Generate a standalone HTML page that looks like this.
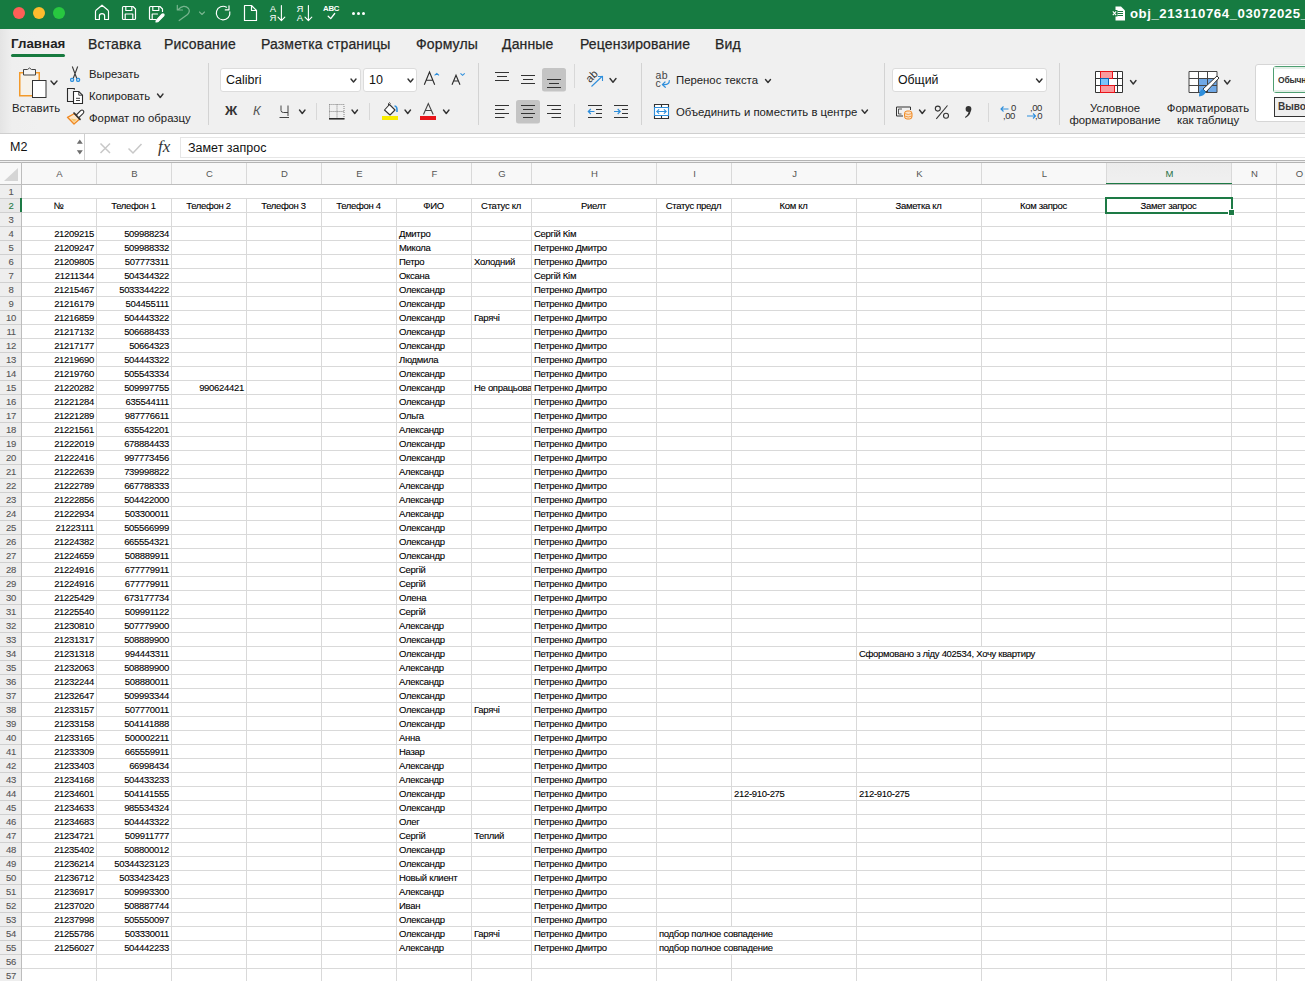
<!DOCTYPE html><html><head><meta charset="utf-8"><style>
*{margin:0;padding:0;box-sizing:border-box}
html,body{width:1305px;height:981px;overflow:hidden;background:#fff;font-family:"Liberation Sans",sans-serif;position:relative}
.a{position:absolute;white-space:nowrap}
.t{position:absolute;white-space:nowrap;font-size:9.5px;letter-spacing:-0.3px;line-height:14px;color:#000;margin-top:1px;-webkit-text-stroke:0.1px #000}
.r{text-align:right}
.c{text-align:center}
.vl{position:absolute;width:1px;background:#d9d9d9}
.hl{position:absolute;height:1px;background:#d9d9d9}
.rb{font-size:11.5px;color:#222;position:absolute;white-space:nowrap;line-height:14px}
svg{position:absolute;overflow:visible}
</style></head><body>

<div class="a" style="left:0;top:0;width:1305px;height:29px;background:#167b41"></div>
<div class="a" style="left:13px;top:7px;width:12px;height:12px;border-radius:50%;background:#fe5f57"></div>
<div class="a" style="left:33px;top:7px;width:12px;height:12px;border-radius:50%;background:#febc2e"></div>
<div class="a" style="left:53px;top:7px;width:12px;height:12px;border-radius:50%;background:#28c840"></div>
<svg style="left:0;top:0" width="400" height="29" fill="none" stroke="#fff" stroke-width="1.2" stroke-linejoin="round" stroke-linecap="round">
<path d="M95.5 11.5 Q95.5 10.8 96 10.3 L102 5.2 L108 10.3 Q108.5 10.8 108.5 11.5 V19.5 H104.6 V15.8 Q104.6 13.6 102 13.6 Q99.4 13.6 99.4 15.8 V19.5 H95.5 Z"/>
<path d="M123.5 6.5 H133 L135.5 9 V18.5 Q135.5 19.5 134.5 19.5 H123.5 Q122.5 19.5 122.5 18.5 V7.5 Q122.5 6.5 123.5 6.5 Z M125.8 6.5 V10.5 H131.8 V6.5 M125.2 19.5 V14 H132.8 V19.5"/>
<path d="M150.5 6.5 H160 L162.5 9 V11.5 M156 19.5 H150.5 Q149.5 19.5 149.5 18.5 V7.5 Q149.5 6.5 150.5 6.5 M152.8 6.5 V10.5 H158.8 V6.5 M152.2 19.5 V14 H157.5"/>
<path d="M156.3 20.3 L162 14.2 Q163 13.4 163.8 14.2 Q164.5 15 163.7 15.9 L158 21.7 L156 21.9 Z" fill="#fff"/>
<path d="M229.8 11.9 A6.8 6.8 0 1 1 226.5 7.2 M225.3 9.9 H229 V5.9" />
<path d="M244.5 5.5 H251.5 L256.5 10.5 V20.5 H244.5 Z M251.5 5.5 V10.5 H256.5"/>
<path d="M281.4 5.5 V20.5 M278 17.2 L281.4 20.6 L284.8 17.2 M308.4 5.5 V20.5 M305 17.2 L308.4 20.6 L311.8 17.2" stroke-width="1.1"/>
<path d="M177.3 5.3 V10 H182.5 M177.8 9.8 Q184 3.5 188.5 8.5 Q190.5 11.5 187.5 14.5 L179.2 20.6" stroke="#79b58f" stroke-width="1.2"/>
<path d="M199.5 12 L202 14.5 L204.5 12" stroke="#79b58f" stroke-width="1.1"/>
<path d="M328.2 16.2 L330.7 18.6 L334.7 13.5" stroke-width="1.3"/>
</svg>
<div class="a" style="left:269px;top:4px;font-size:9.5px;line-height:9px;color:#fff;width:8px;text-align:center">A</div>
<div class="a" style="left:269px;top:13px;font-size:9.5px;line-height:9px;color:#fff;width:8px;text-align:center">Я</div>
<div class="a" style="left:296px;top:4px;font-size:9.5px;line-height:9px;color:#fff;width:8px;text-align:center">Я</div>
<div class="a" style="left:296px;top:13px;font-size:9.5px;line-height:9px;color:#fff;width:8px;text-align:center">A</div>
<div class="a" style="left:323px;top:4px;font-size:7.8px;line-height:9px;color:#fff;font-weight:bold;letter-spacing:-0.2px">ABC</div>
<div class="a" style="left:351.5px;top:11.6px;width:3px;height:3px;border-radius:50%;background:#fff"></div>
<div class="a" style="left:356.5px;top:11.6px;width:3px;height:3px;border-radius:50%;background:#fff"></div>
<div class="a" style="left:361.5px;top:11.6px;width:3px;height:3px;border-radius:50%;background:#fff"></div>
<svg style="left:0;top:0" width="1305" height="29"><path d="M1115.5 6.5 H1121 L1125 10.5 V20.5 H1115.5 Z" fill="#fff"/><path d="M1117.5 11.5 H1123 M1117.5 13.5 H1123 M1117.5 15.5 H1123" stroke="#177a3f" stroke-width="1"/><rect x="1111.5" y="10" width="6" height="6.5" fill="#177a3f"/><path d="M1112.8 11.3 L1116.2 15.2 M1116.2 11.3 L1112.8 15.2" stroke="#fff" stroke-width="1.1"/></svg>
<div class="a" style="left:1130px;top:6px;font-size:12px;line-height:16px;color:#fff;font-weight:bold;letter-spacing:0.5px;transform:scaleX(1.1);transform-origin:0 0">obj_213110764_03072025_</div>
<div class="a" style="left:0;top:29px;width:1305px;height:104px;background:linear-gradient(90deg,#e4e4e4 0px,#efefef 12px,#f0f0f0 40px)"></div>
<div class="a" style="left:0;top:133px;width:1305px;height:1px;background:#cfcfcf"></div>
<div class="a" style="left:11px;top:36px;line-height:16px;color:#222;font-weight:bold;font-size:13.3px;letter-spacing:0.05px">Главная</div>
<div class="a" style="left:88px;top:36px;line-height:16px;color:#222;font-weight:normal;-webkit-text-stroke:0.25px #333;font-size:14px;letter-spacing:0.15px">Вставка</div>
<div class="a" style="left:164px;top:36px;line-height:16px;color:#222;font-weight:normal;-webkit-text-stroke:0.25px #333;font-size:14px;letter-spacing:0.15px">Рисование</div>
<div class="a" style="left:261px;top:36px;line-height:16px;color:#222;font-weight:normal;-webkit-text-stroke:0.25px #333;font-size:14px;letter-spacing:0.15px">Разметка страницы</div>
<div class="a" style="left:416px;top:36px;line-height:16px;color:#222;font-weight:normal;-webkit-text-stroke:0.25px #333;font-size:14px;letter-spacing:0.15px">Формулы</div>
<div class="a" style="left:502px;top:36px;line-height:16px;color:#222;font-weight:normal;-webkit-text-stroke:0.25px #333;font-size:14px;letter-spacing:0.15px">Данные</div>
<div class="a" style="left:580px;top:36px;line-height:16px;color:#222;font-weight:normal;-webkit-text-stroke:0.25px #333;font-size:14px;letter-spacing:0.15px">Рецензирование</div>
<div class="a" style="left:715px;top:36px;line-height:16px;color:#222;font-weight:normal;-webkit-text-stroke:0.25px #333;font-size:14px;letter-spacing:0.15px">Вид</div>
<div class="a" style="left:11px;top:54px;width:54px;height:3px;border-radius:2px;background:#177a3f"></div>
<div class="a" style="left:208px;top:63px;width:1px;height:62px;background:#d3d3d3"></div>
<div class="a" style="left:478px;top:63px;width:1px;height:62px;background:#d3d3d3"></div>
<div class="a" style="left:641px;top:63px;width:1px;height:62px;background:#d3d3d3"></div>
<div class="a" style="left:884px;top:63px;width:1px;height:62px;background:#d3d3d3"></div>
<div class="a" style="left:1059px;top:63px;width:1px;height:62px;background:#d3d3d3"></div>
<div class="a" style="left:574px;top:64px;width:1px;height:24px;background:#d8d8d8"></div>
<div class="a" style="left:574px;top:104px;width:1px;height:23px;background:#d8d8d8"></div>
<div class="a" style="left:316px;top:103px;width:1px;height:17px;background:#d8d8d8"></div>
<div class="a" style="left:369px;top:103px;width:1px;height:17px;background:#d8d8d8"></div>
<div class="a" style="left:988px;top:103px;width:1px;height:19px;background:#d8d8d8"></div>
<svg style="left:0;top:0" width="1305" height="133"><rect x="19.75" y="72.75" width="19.5" height="23" fill="#f6f2ea" stroke="#f39a2b" stroke-width="1.5"/><path d="M23.5 75 V69.5 H27.5 Q29.5 66.5 31.5 69.5 H35.5 V75 Z" fill="#f4f4f4" stroke="#444" stroke-width="1"/><rect x="32.5" y="80.5" width="13.5" height="17" fill="#fff" stroke="#333" stroke-width="1"/><path d="M51 81 L54.0 84.5 L57 81" stroke="#333" stroke-width="1.4" fill="none" stroke-linecap="round" stroke-linejoin="round"/><path d="M157.5 94 L160.25 97.5 L163.0 94" stroke="#333" stroke-width="1.4" fill="none" stroke-linecap="round" stroke-linejoin="round"/><path d="M72.3 66.5 L77 79 M77.7 66.5 L73 79" stroke="#3a3a3a" stroke-width="1.1" fill="none"/><rect x="70.6" y="78.3" width="3" height="3" rx="1" fill="#bfe0f7" stroke="#2f8fdc" stroke-width="1.2"/><rect x="76.6" y="78.3" width="3" height="3" rx="1" fill="#bfe0f7" stroke="#2f8fdc" stroke-width="1.2"/><path d="M74.3 89.8 V88.5 H67.5 V101.5 H73.3" fill="none" stroke="#2a2a2a" stroke-width="1.1" stroke-linejoin="miter"/><path d="M73.5 91.5 H78.8 L82.5 95.2 V103.5 H73.5 Z" fill="#fff" stroke="#2a2a2a" stroke-width="1.1" stroke-linejoin="miter"/><path d="M78.8 91.5 V95.2 H82.5" fill="none" stroke="#2a2a2a" stroke-width="0.9"/><path d="M76 98.3 H80 M76 100.5 H80" stroke="#2a2a2a" stroke-width="0.9"/><path d="M74.5 113.5 L67.5 117.3 L74 124 L79.6 119 Z" fill="#fde6c8" stroke="#f08a24" stroke-width="1.4" stroke-linejoin="round"/><path d="M70.5 118.5 L74 122 L77 119.5" fill="#f7c66a" stroke="none"/><path d="M76.3 115 L80.6 110.7 Q82 109.3 83.3 110.6 Q84.6 112 83.2 113.3 L78.8 117.6" fill="#fff" stroke="#333" stroke-width="1.1"/><path d="M74 113 L80 119.3" stroke="#333" stroke-width="1.7" stroke-linecap="round"/><path d="M351 79 L353.5 82 L356 79" stroke="#333" stroke-width="1.4" fill="none" stroke-linecap="round" stroke-linejoin="round"/><path d="M408 79 L410.5 82 L413 79" stroke="#333" stroke-width="1.4" fill="none" stroke-linecap="round" stroke-linejoin="round"/><path d="M424.3 84.8 L429.5 72 L434.7 84.8 M426.3 80.3 H432.7" fill="none" stroke="#2a2a2a" stroke-width="1.1"/><path d="M434.6 75.4 L436.8 73.4 L439 75.4" fill="none" stroke="#2f8fdc" stroke-width="1.1"/><path d="M452 84.8 L456 75.2 L460 84.8 M453.6 81 H458.4" fill="none" stroke="#2a2a2a" stroke-width="1.1"/><path d="M460.5 73.3 L462.6 75.3 L464.7 73.3" fill="none" stroke="#2f8fdc" stroke-width="1.1"/><path d="M279.5 117.5 H289" stroke="#444" stroke-width="1"/><path d="M281 105.5 V110.5 Q281 112.5 283.5 112.5 H288 M288 105.5 V116" fill="none" stroke="#444" stroke-width="1"/><path d="M299.5 110 L302.25 113.5 L305.0 110" stroke="#333" stroke-width="1.4" fill="none" stroke-linecap="round" stroke-linejoin="round"/><path d="M329.5 104.5 H344 V118.5 M329.5 104.5 V118.5 M337 104.5 V118.5 M329.5 111.5 H344" fill="none" stroke="#666" stroke-width="0.9" stroke-dasharray="0.9 1.1"/><path d="M329 118.8 H344.5" stroke="#222" stroke-width="1.5"/><path d="M352 110 L354.75 113.5 L357.5 110" stroke="#333" stroke-width="1.4" fill="none" stroke-linecap="round" stroke-linejoin="round"/><path d="M384.5 110 L389.5 104.5 L395 110 L390 115 Z" fill="#fff" stroke="#333" stroke-width="1.1" stroke-linejoin="round"/><path d="M388.5 105.5 V103.5 Q389.5 102 390.5 103.5" fill="none" stroke="#333" stroke-width="1"/><path d="M394.5 106 Q397.5 106 397 112" fill="none" stroke="#2f8fdc" stroke-width="1.6"/><rect x="382" y="116" width="16" height="4" fill="#f8ec00"/><path d="M405 110 L407.75 113.5 L410.5 110" stroke="#333" stroke-width="1.4" fill="none" stroke-linecap="round" stroke-linejoin="round"/><path d="M423.5 114.5 L428.3 103.5 L433.2 114.5 M425.3 110.5 H431.4" fill="none" stroke="#444" stroke-width="1.1"/><rect x="420" y="116" width="16" height="4" fill="#e8141a"/><path d="M443.5 110 L446.25 113.5 L449.0 110" stroke="#333" stroke-width="1.4" fill="none" stroke-linecap="round" stroke-linejoin="round"/><rect x="542" y="68" width="24" height="23.5" rx="2.5" fill="#c4c4c4"/><rect x="516" y="100" width="24" height="23.5" rx="2.5" fill="#c4c4c4"/><path d="M495 72.5 H509 M497 76.5 H507 M495 80.5 H509 M521 75.5 H535 M523 79.5 H533 M521 83.5 H535 M547 79.5 H561 M549 83.5 H559 M547 87.5 H561 M495 105.5 H509 M495 109.5 H504.5 M495 113.5 H509 M495 117.5 H504.5 M521 105.5 H535 M523 109.5 H533 M521 113.5 H535 M523 117.5 H533 M547 105.5 H561 M551.5 109.5 H561 M547 113.5 H561 M551.5 117.5 H561 M588 105.5 H602 M596 109.5 H602 M596 113.5 H602 M588 117.5 H602 M614 105.5 H628 M622 109.5 H628 M622 113.5 H628 M614 117.5 H628 " stroke="#333" stroke-width="1.1" fill="none"/><path d="M588.5 111.5 H594.5 M590.8 109 L588.3 111.5 L590.8 114 M614 111.5 H620 M617.7 109 L620.2 111.5 L617.7 114" fill="none" stroke="#2f8fdc" stroke-width="1.2"/><path d="M591.5 86.5 L602.5 76 M598 76.5 H602.5 V81" fill="none" stroke="#2f8fdc" stroke-width="1.1"/><path d="M610 78.5 L613.0 82.2 L616 78.5" stroke="#333" stroke-width="1.4" fill="none" stroke-linecap="round" stroke-linejoin="round"/><path d="M669.3 80.5 Q669.5 84.6 664.5 84.6 H662.5 M665 82 L662.3 84.6 L665.3 87.3" fill="none" stroke="#2f8fdc" stroke-width="1.2" stroke-linecap="round" stroke-linejoin="round"/><path d="M765.5 79.5 L768.0 82.5 L770.5 79.5" stroke="#333" stroke-width="1.4" fill="none" stroke-linecap="round" stroke-linejoin="round"/><rect x="654.5" y="104.5" width="14" height="14" fill="#fff"/><path d="M654.5 107.5 V104.5 H668.5 V107.5 M654.5 115.5 V118.5 H668.5 V115.5 M661.5 104.5 V107.5 M661.5 115.5 V118.5" fill="none" stroke="#333" stroke-width="1.1"/><path d="M654.5 107.5 H668.5 V115.5 H654.5 Z" fill="none" stroke="#2f8fdc" stroke-width="1.1"/><path d="M657 111.5 H666 M658.8 109.6 L656.8 111.5 L658.8 113.4 M664.2 109.6 L666.2 111.5 L664.2 113.4" stroke="#2f8fdc" stroke-width="1.1" fill="none" stroke-linecap="round"/><path d="M862 110 L864.75 113.3 L867.5 110" stroke="#333" stroke-width="1.4" fill="none" stroke-linecap="round" stroke-linejoin="round"/><path d="M1036.5 79 L1039.25 82.2 L1042.0 79" stroke="#333" stroke-width="1.4" fill="none" stroke-linecap="round" stroke-linejoin="round"/><path d="M896.5 107 H910.5 V110 M896.5 107 V116 H903" fill="none" stroke="#333" stroke-width="1"/><path d="M898.5 109 H902 M898.5 109 V114 H901.5" fill="none" stroke="#333" stroke-width="0.8"/><rect x="904.5" y="111" width="7.5" height="8" rx="2.5" fill="#fbe1c4" stroke="#f08a24" stroke-width="1"/><path d="M904.5 113.5 Q908.3 115.5 912 113.5 M904.5 116 Q908.3 118 912 116" fill="none" stroke="#f08a24" stroke-width="0.8"/><path d="M919.5 110 L922.25 113.5 L925.0 110" stroke="#333" stroke-width="1.4" fill="none" stroke-linecap="round" stroke-linejoin="round"/><path d="M1008.5 109 H1001 M1003.5 106.5 L1001 109 L1003.5 111.5 M1027 116 H1035.5 M1033 113.5 L1035.5 116 L1033 118.5" fill="none" stroke="#2f8fdc" stroke-width="1.1"/><rect x="1095.5" y="71.5" width="27" height="21" fill="#fff"/><path d="M1095.5 71.5 H1122.5 V92.5 H1095.5 Z M1095.5 78.5 H1122.5 M1095.5 85.5 H1122.5 M1117.5 71.5 V92.5" fill="none" stroke="#333" stroke-width="1"/><rect x="1100.5" y="71.5" width="12" height="7" fill="#fb9a9e" stroke="#e8141a" stroke-width="1"/><rect x="1100.5" y="78.5" width="8" height="7" fill="#7cc4fb" stroke="#0a64b4" stroke-width="1"/><rect x="1100.5" y="85.5" width="14" height="7" fill="#fb9a9e" stroke="#e8141a" stroke-width="1"/><path d="M1130.5 80.5 L1133.25 84.0 L1136.0 80.5" stroke="#333" stroke-width="1.4" fill="none" stroke-linecap="round" stroke-linejoin="round"/><rect x="1189" y="71.5" width="28" height="21" fill="#fff"/><rect x="1198" y="78.5" width="19" height="14" fill="#6fa8e6"/><path d="M1189 71.5 H1217 V92.5 H1189 Z M1189 78.5 H1217 M1189 85.5 H1217 M1198.5 71.5 V92.5 M1207.5 71.5 V92.5" fill="none" stroke="#444" stroke-width="1"/><path d="M1203 89 L1217 76 L1219 78 L1206 92 Z" fill="#fff" stroke="#333" stroke-width="1"/><path d="M1199 96.5 Q1199 90 1203 89 L1206 92 Q1204 96 1199 96.5 Z" fill="#2f8fdc"/><path d="M1224.5 80.5 L1227.25 84.0 L1230.0 80.5" stroke="#333" stroke-width="1.4" fill="none" stroke-linecap="round" stroke-linejoin="round"/></svg>
<div class="rb" style="left:12px;top:101px;font-size:11.35px;color:#222">Вставить</div>
<div class="rb" style="left:89px;top:67px;font-size:11.35px;color:#222">Вырезать</div>
<div class="rb" style="left:89px;top:89px;font-size:11.35px;color:#222">Копировать</div>
<div class="rb" style="left:89px;top:111px;font-size:11.35px;color:#222">Формат по образцу</div>
<div class="rb" style="left:676px;top:73px;font-size:11.35px;color:#222">Перенос текста</div>
<div class="rb" style="left:676px;top:105px;font-size:11.35px;color:#222">Объединить и поместить в центре</div>
<div class="rb c" style="left:1065px;top:102px;width:100px;line-height:12px;font-size:11.35px;color:#222">Условное<br>форматирование</div>
<div class="rb c" style="left:1158px;top:102px;width:100px;line-height:12px;font-size:11.35px;color:#222">Форматировать<br>как таблицу</div>
<div class="a" style="left:220px;top:68px;width:141px;height:24px;background:#fff;border:1px solid #dcdcdc;border-radius:3px"></div>
<div class="a" style="left:363px;top:68px;width:54px;height:24px;background:#fff;border:1px solid #dcdcdc;border-radius:3px"></div>
<div class="a" style="left:892px;top:68px;width:155px;height:24px;background:#fff;border:1px solid #dcdcdc;border-radius:3px"></div>
<svg style="left:0;top:0" width="1305" height="133"><path d="M351 79 L353.5 82 L356 79" stroke="#333" stroke-width="1.4" fill="none" stroke-linecap="round" stroke-linejoin="round"/><path d="M408 79 L410.5 82 L413 79" stroke="#333" stroke-width="1.4" fill="none" stroke-linecap="round" stroke-linejoin="round"/><path d="M1036.5 79 L1039.25 82.2 L1042.0 79" stroke="#333" stroke-width="1.4" fill="none" stroke-linecap="round" stroke-linejoin="round"/></svg>
<div class="rb" style="left:226px;top:73px;font-size:12.5px;color:#111">Calibri</div>
<div class="rb" style="left:369px;top:73px;font-size:12.5px;color:#111">10</div>
<div class="rb" style="left:898px;top:73px;font-size:12.3px;color:#111">Общий</div>
<div class="a" style="left:225px;top:103px;font-size:13.5px;line-height:16px;color:#333;font-weight:bold">Ж</div>
<div class="a" style="left:253px;top:103px;font-size:13px;line-height:16px;color:#555;font-style:italic">К</div>
<div class="a" style="left:584.5px;top:70px;width:13px;text-align:center;font-size:11px;line-height:12px;color:#333;transform:rotate(-45deg);transform-origin:50% 50%">ab</div>
<div class="a" style="left:655.5px;top:70px;font-size:10.5px;line-height:10px;color:#444;letter-spacing:0.3px">ab</div>
<div class="a" style="left:655.5px;top:78px;font-size:10.5px;line-height:10px;color:#444">c</div>
<svg style="left:0;top:0" width="1305" height="133"><circle cx="937.8" cy="108.6" r="2.5" fill="none" stroke="#333" stroke-width="1.1"/><circle cx="946" cy="115.8" r="2.5" fill="none" stroke="#333" stroke-width="1.1"/><path d="M947.5 105.5 L936.3 118.8" stroke="#333" stroke-width="1.1"/></svg>
<svg style="left:0;top:0" width="1305" height="133"><circle cx="968.5" cy="109" r="2.9" fill="#333"/><path d="M970.5 108.5 Q972 114 965.5 118 L965 117 Q969 114 968.5 110.5 Z" fill="#333"/></svg>
<div class="a" style="left:1011px;top:103px;font-size:9.5px;line-height:9px;color:#333">0</div>
<div class="a" style="left:1003px;top:111px;font-size:9.5px;line-height:9px;color:#333;letter-spacing:-0.5px">,00</div>
<div class="a" style="left:1030px;top:103px;font-size:9.5px;line-height:9px;color:#333;letter-spacing:-0.5px">,00</div>
<div class="a" style="left:1035px;top:111px;font-size:9.5px;line-height:9px;color:#333;letter-spacing:-0.5px">,0</div>
<div class="a" style="left:1255px;top:64px;width:60px;height:58px;background:#fff;border:1px solid #d6d6d6;border-radius:3px"></div>
<div class="a" style="left:1273px;top:66px;width:40px;height:27px;background:#fff;border:1px solid #4f9f72;border-radius:3px"></div>
<div class="a" style="left:1274px;top:67px;width:40px;height:2px;background:#e3efe7"></div>
<div class="a" style="left:1274px;top:90px;width:40px;height:2px;background:#e3efe7"></div>
<div class="a" style="left:1278px;top:74px;font-size:8.5px;line-height:12px;color:#333;font-weight:bold;letter-spacing:-0.2px">Обычн</div>
<div class="a" style="left:1274px;top:97px;width:40px;height:20px;background:#efefef;border:1px solid #333;border-width:1.5px 1px 1.5px 1px"></div>
<div class="a" style="left:1278px;top:100.5px;font-size:10px;line-height:12px;color:#3a3a3a;font-weight:bold">Выво</div>
<div class="a" style="left:0;top:134px;width:1305px;height:26px;background:#fff"></div>
<div class="a" style="left:84px;top:134px;width:1px;height:26px;background:#cfcfcf"></div>
<div class="a" style="left:180px;top:137px;width:1130px;height:21px;background:#fff;border:1px solid #e6e6e6;border-right:none"></div>
<div class="a" style="left:0;top:160px;width:1305px;height:3px;background:#f0f0f0;border-top:1px solid #b4b4b4;border-bottom:1px solid #b4b4b4"></div>
<div class="a" style="left:10px;top:139px;font-size:12.5px;line-height:16px;color:#111">M2</div>
<svg style="left:0;top:0" width="200" height="162">
<path d="M76.8 143.8 L79.8 139.5 L82.8 143.8 Z M76.8 150.2 L79.8 154.5 L82.8 150.2 Z" fill="#6e6e6e"/>
<path d="M100.5 143.5 L110 153 M110 143.5 L100.5 153 M128.5 148.5 L133 153 L141.5 144" stroke="#c8c8c8" stroke-width="1.5" fill="none"/>
</svg>
<div class="a" style="left:158px;top:137px;font-size:17px;line-height:20px;color:#333;font-family:'Liberation Serif',serif;font-style:italic">fx</div>
<div class="a" style="left:188px;top:140px;font-size:12.5px;line-height:16px;color:#111">Замет запрос</div>
<div class="a" style="left:0;top:163px;width:1305px;height:21px;background:#f8f8f8"></div>
<div class="a" style="left:0;top:184px;width:21px;height:797px;background:#eeeeee"></div>
<div class="a" style="left:1106px;top:163px;width:125px;height:21px;background:linear-gradient(#ececec,#f0f0f0)"></div>
<div class="a" style="left:0;top:198px;width:21px;height:14px;background:#e9e9e9"></div>
<svg style="left:0;top:162px" width="21" height="22"><path d="M4 19 L18 19 L18 6 Z" fill="#d5d5d5"/></svg>
<div class="vl" style="left:21px;top:163px;height:21px;background:#d9d9d9"></div>
<div class="vl" style="left:96px;top:163px;height:21px;background:#d9d9d9"></div>
<div class="vl" style="left:171px;top:163px;height:21px;background:#d9d9d9"></div>
<div class="vl" style="left:246px;top:163px;height:21px;background:#d9d9d9"></div>
<div class="vl" style="left:321px;top:163px;height:21px;background:#d9d9d9"></div>
<div class="vl" style="left:396px;top:163px;height:21px;background:#d9d9d9"></div>
<div class="vl" style="left:471px;top:163px;height:21px;background:#d9d9d9"></div>
<div class="vl" style="left:531px;top:163px;height:21px;background:#d9d9d9"></div>
<div class="vl" style="left:656px;top:163px;height:21px;background:#d9d9d9"></div>
<div class="vl" style="left:731px;top:163px;height:21px;background:#d9d9d9"></div>
<div class="vl" style="left:856px;top:163px;height:21px;background:#d9d9d9"></div>
<div class="vl" style="left:981px;top:163px;height:21px;background:#d9d9d9"></div>
<div class="vl" style="left:1106px;top:163px;height:21px;background:#d9d9d9"></div>
<div class="vl" style="left:1231px;top:163px;height:21px;background:#d9d9d9"></div>
<div class="vl" style="left:1276px;top:163px;height:21px;background:#d9d9d9"></div>
<div class="vl" style="left:21px;top:162px;height:819px;background:#bdbdbd"></div>
<div class="a c" style="left:22px;top:167px;width:75px;font-size:9.5px;line-height:14px;color:#555">A</div>
<div class="a c" style="left:97px;top:167px;width:75px;font-size:9.5px;line-height:14px;color:#555">B</div>
<div class="a c" style="left:172px;top:167px;width:75px;font-size:9.5px;line-height:14px;color:#555">C</div>
<div class="a c" style="left:247px;top:167px;width:75px;font-size:9.5px;line-height:14px;color:#555">D</div>
<div class="a c" style="left:322px;top:167px;width:75px;font-size:9.5px;line-height:14px;color:#555">E</div>
<div class="a c" style="left:397px;top:167px;width:75px;font-size:9.5px;line-height:14px;color:#555">F</div>
<div class="a c" style="left:472px;top:167px;width:60px;font-size:9.5px;line-height:14px;color:#555">G</div>
<div class="a c" style="left:532px;top:167px;width:125px;font-size:9.5px;line-height:14px;color:#555">H</div>
<div class="a c" style="left:657px;top:167px;width:75px;font-size:9.5px;line-height:14px;color:#555">I</div>
<div class="a c" style="left:732px;top:167px;width:125px;font-size:9.5px;line-height:14px;color:#555">J</div>
<div class="a c" style="left:857px;top:167px;width:125px;font-size:9.5px;line-height:14px;color:#555">K</div>
<div class="a c" style="left:982px;top:167px;width:125px;font-size:9.5px;line-height:14px;color:#555">L</div>
<div class="a c" style="left:1107px;top:167px;width:125px;font-size:9.5px;line-height:14px;color:#1d7145">M</div>
<div class="a c" style="left:1232px;top:167px;width:45px;font-size:9.5px;line-height:14px;color:#555">N</div>
<div class="a c" style="left:1277px;top:167px;width:45px;font-size:9.5px;line-height:14px;color:#555">O</div>
<div class="a" style="left:1106px;top:183px;width:126px;height:2px;background:#1d7a45"></div>
<div class="hl" style="left:0;top:184px;width:1305px;background:#bdbdbd"></div>
<div class="vl" style="left:96px;top:198px;height:783px"></div>
<div class="vl" style="left:171px;top:198px;height:783px"></div>
<div class="vl" style="left:246px;top:198px;height:783px"></div>
<div class="vl" style="left:321px;top:198px;height:783px"></div>
<div class="vl" style="left:396px;top:198px;height:783px"></div>
<div class="vl" style="left:471px;top:198px;height:783px"></div>
<div class="vl" style="left:531px;top:198px;height:783px"></div>
<div class="vl" style="left:656px;top:198px;height:783px"></div>
<div class="vl" style="left:731px;top:198px;height:783px"></div>
<div class="vl" style="left:856px;top:198px;height:783px"></div>
<div class="vl" style="left:981px;top:198px;height:783px"></div>
<div class="vl" style="left:1106px;top:198px;height:783px"></div>
<div class="vl" style="left:1231px;top:198px;height:783px"></div>
<div class="vl" style="left:1276px;top:198px;height:783px"></div>
<div class="vl" style="left:1276px;top:185px;height:13px"></div>
<div class="vl" style="left:1231px;top:185px;height:13px"></div>
<div class="hl" style="left:22px;top:198px;width:1283px"></div>
<div class="hl" style="left:0;top:198px;width:21px;background:#d0d0d0"></div>
<div class="hl" style="left:22px;top:212px;width:1283px"></div>
<div class="hl" style="left:0;top:212px;width:21px;background:#d0d0d0"></div>
<div class="hl" style="left:22px;top:226px;width:1283px"></div>
<div class="hl" style="left:0;top:226px;width:21px;background:#d0d0d0"></div>
<div class="hl" style="left:22px;top:240px;width:1283px"></div>
<div class="hl" style="left:0;top:240px;width:21px;background:#d0d0d0"></div>
<div class="hl" style="left:22px;top:254px;width:1283px"></div>
<div class="hl" style="left:0;top:254px;width:21px;background:#d0d0d0"></div>
<div class="hl" style="left:22px;top:268px;width:1283px"></div>
<div class="hl" style="left:0;top:268px;width:21px;background:#d0d0d0"></div>
<div class="hl" style="left:22px;top:282px;width:1283px"></div>
<div class="hl" style="left:0;top:282px;width:21px;background:#d0d0d0"></div>
<div class="hl" style="left:22px;top:296px;width:1283px"></div>
<div class="hl" style="left:0;top:296px;width:21px;background:#d0d0d0"></div>
<div class="hl" style="left:22px;top:310px;width:1283px"></div>
<div class="hl" style="left:0;top:310px;width:21px;background:#d0d0d0"></div>
<div class="hl" style="left:22px;top:324px;width:1283px"></div>
<div class="hl" style="left:0;top:324px;width:21px;background:#d0d0d0"></div>
<div class="hl" style="left:22px;top:338px;width:1283px"></div>
<div class="hl" style="left:0;top:338px;width:21px;background:#d0d0d0"></div>
<div class="hl" style="left:22px;top:352px;width:1283px"></div>
<div class="hl" style="left:0;top:352px;width:21px;background:#d0d0d0"></div>
<div class="hl" style="left:22px;top:366px;width:1283px"></div>
<div class="hl" style="left:0;top:366px;width:21px;background:#d0d0d0"></div>
<div class="hl" style="left:22px;top:380px;width:1283px"></div>
<div class="hl" style="left:0;top:380px;width:21px;background:#d0d0d0"></div>
<div class="hl" style="left:22px;top:394px;width:1283px"></div>
<div class="hl" style="left:0;top:394px;width:21px;background:#d0d0d0"></div>
<div class="hl" style="left:22px;top:408px;width:1283px"></div>
<div class="hl" style="left:0;top:408px;width:21px;background:#d0d0d0"></div>
<div class="hl" style="left:22px;top:422px;width:1283px"></div>
<div class="hl" style="left:0;top:422px;width:21px;background:#d0d0d0"></div>
<div class="hl" style="left:22px;top:436px;width:1283px"></div>
<div class="hl" style="left:0;top:436px;width:21px;background:#d0d0d0"></div>
<div class="hl" style="left:22px;top:450px;width:1283px"></div>
<div class="hl" style="left:0;top:450px;width:21px;background:#d0d0d0"></div>
<div class="hl" style="left:22px;top:464px;width:1283px"></div>
<div class="hl" style="left:0;top:464px;width:21px;background:#d0d0d0"></div>
<div class="hl" style="left:22px;top:478px;width:1283px"></div>
<div class="hl" style="left:0;top:478px;width:21px;background:#d0d0d0"></div>
<div class="hl" style="left:22px;top:492px;width:1283px"></div>
<div class="hl" style="left:0;top:492px;width:21px;background:#d0d0d0"></div>
<div class="hl" style="left:22px;top:506px;width:1283px"></div>
<div class="hl" style="left:0;top:506px;width:21px;background:#d0d0d0"></div>
<div class="hl" style="left:22px;top:520px;width:1283px"></div>
<div class="hl" style="left:0;top:520px;width:21px;background:#d0d0d0"></div>
<div class="hl" style="left:22px;top:534px;width:1283px"></div>
<div class="hl" style="left:0;top:534px;width:21px;background:#d0d0d0"></div>
<div class="hl" style="left:22px;top:548px;width:1283px"></div>
<div class="hl" style="left:0;top:548px;width:21px;background:#d0d0d0"></div>
<div class="hl" style="left:22px;top:562px;width:1283px"></div>
<div class="hl" style="left:0;top:562px;width:21px;background:#d0d0d0"></div>
<div class="hl" style="left:22px;top:576px;width:1283px"></div>
<div class="hl" style="left:0;top:576px;width:21px;background:#d0d0d0"></div>
<div class="hl" style="left:22px;top:590px;width:1283px"></div>
<div class="hl" style="left:0;top:590px;width:21px;background:#d0d0d0"></div>
<div class="hl" style="left:22px;top:604px;width:1283px"></div>
<div class="hl" style="left:0;top:604px;width:21px;background:#d0d0d0"></div>
<div class="hl" style="left:22px;top:618px;width:1283px"></div>
<div class="hl" style="left:0;top:618px;width:21px;background:#d0d0d0"></div>
<div class="hl" style="left:22px;top:632px;width:1283px"></div>
<div class="hl" style="left:0;top:632px;width:21px;background:#d0d0d0"></div>
<div class="hl" style="left:22px;top:646px;width:1283px"></div>
<div class="hl" style="left:0;top:646px;width:21px;background:#d0d0d0"></div>
<div class="hl" style="left:22px;top:660px;width:1283px"></div>
<div class="hl" style="left:0;top:660px;width:21px;background:#d0d0d0"></div>
<div class="hl" style="left:22px;top:674px;width:1283px"></div>
<div class="hl" style="left:0;top:674px;width:21px;background:#d0d0d0"></div>
<div class="hl" style="left:22px;top:688px;width:1283px"></div>
<div class="hl" style="left:0;top:688px;width:21px;background:#d0d0d0"></div>
<div class="hl" style="left:22px;top:702px;width:1283px"></div>
<div class="hl" style="left:0;top:702px;width:21px;background:#d0d0d0"></div>
<div class="hl" style="left:22px;top:716px;width:1283px"></div>
<div class="hl" style="left:0;top:716px;width:21px;background:#d0d0d0"></div>
<div class="hl" style="left:22px;top:730px;width:1283px"></div>
<div class="hl" style="left:0;top:730px;width:21px;background:#d0d0d0"></div>
<div class="hl" style="left:22px;top:744px;width:1283px"></div>
<div class="hl" style="left:0;top:744px;width:21px;background:#d0d0d0"></div>
<div class="hl" style="left:22px;top:758px;width:1283px"></div>
<div class="hl" style="left:0;top:758px;width:21px;background:#d0d0d0"></div>
<div class="hl" style="left:22px;top:772px;width:1283px"></div>
<div class="hl" style="left:0;top:772px;width:21px;background:#d0d0d0"></div>
<div class="hl" style="left:22px;top:786px;width:1283px"></div>
<div class="hl" style="left:0;top:786px;width:21px;background:#d0d0d0"></div>
<div class="hl" style="left:22px;top:800px;width:1283px"></div>
<div class="hl" style="left:0;top:800px;width:21px;background:#d0d0d0"></div>
<div class="hl" style="left:22px;top:814px;width:1283px"></div>
<div class="hl" style="left:0;top:814px;width:21px;background:#d0d0d0"></div>
<div class="hl" style="left:22px;top:828px;width:1283px"></div>
<div class="hl" style="left:0;top:828px;width:21px;background:#d0d0d0"></div>
<div class="hl" style="left:22px;top:842px;width:1283px"></div>
<div class="hl" style="left:0;top:842px;width:21px;background:#d0d0d0"></div>
<div class="hl" style="left:22px;top:856px;width:1283px"></div>
<div class="hl" style="left:0;top:856px;width:21px;background:#d0d0d0"></div>
<div class="hl" style="left:22px;top:870px;width:1283px"></div>
<div class="hl" style="left:0;top:870px;width:21px;background:#d0d0d0"></div>
<div class="hl" style="left:22px;top:884px;width:1283px"></div>
<div class="hl" style="left:0;top:884px;width:21px;background:#d0d0d0"></div>
<div class="hl" style="left:22px;top:898px;width:1283px"></div>
<div class="hl" style="left:0;top:898px;width:21px;background:#d0d0d0"></div>
<div class="hl" style="left:22px;top:912px;width:1283px"></div>
<div class="hl" style="left:0;top:912px;width:21px;background:#d0d0d0"></div>
<div class="hl" style="left:22px;top:926px;width:1283px"></div>
<div class="hl" style="left:0;top:926px;width:21px;background:#d0d0d0"></div>
<div class="hl" style="left:22px;top:940px;width:1283px"></div>
<div class="hl" style="left:0;top:940px;width:21px;background:#d0d0d0"></div>
<div class="hl" style="left:22px;top:954px;width:1283px"></div>
<div class="hl" style="left:0;top:954px;width:21px;background:#d0d0d0"></div>
<div class="hl" style="left:22px;top:968px;width:1283px"></div>
<div class="hl" style="left:0;top:968px;width:21px;background:#d0d0d0"></div>
<div class="t c" style="left:0.5px;top:184px;width:21px;color:#555;font-size:9.5px;letter-spacing:-0.4px;-webkit-text-stroke:0.1px #555">1</div>
<div class="t c" style="left:0.5px;top:198px;width:21px;color:#1d7a45;font-size:9.5px;letter-spacing:-0.4px;-webkit-text-stroke:0.1px #1d7a45">2</div>
<div class="t c" style="left:0.5px;top:212px;width:21px;color:#555;font-size:9.5px;letter-spacing:-0.4px;-webkit-text-stroke:0.1px #555">3</div>
<div class="t c" style="left:0.5px;top:226px;width:21px;color:#555;font-size:9.5px;letter-spacing:-0.4px;-webkit-text-stroke:0.1px #555">4</div>
<div class="t c" style="left:0.5px;top:240px;width:21px;color:#555;font-size:9.5px;letter-spacing:-0.4px;-webkit-text-stroke:0.1px #555">5</div>
<div class="t c" style="left:0.5px;top:254px;width:21px;color:#555;font-size:9.5px;letter-spacing:-0.4px;-webkit-text-stroke:0.1px #555">6</div>
<div class="t c" style="left:0.5px;top:268px;width:21px;color:#555;font-size:9.5px;letter-spacing:-0.4px;-webkit-text-stroke:0.1px #555">7</div>
<div class="t c" style="left:0.5px;top:282px;width:21px;color:#555;font-size:9.5px;letter-spacing:-0.4px;-webkit-text-stroke:0.1px #555">8</div>
<div class="t c" style="left:0.5px;top:296px;width:21px;color:#555;font-size:9.5px;letter-spacing:-0.4px;-webkit-text-stroke:0.1px #555">9</div>
<div class="t c" style="left:0.5px;top:310px;width:21px;color:#555;font-size:9.5px;letter-spacing:-0.4px;-webkit-text-stroke:0.1px #555">10</div>
<div class="t c" style="left:0.5px;top:324px;width:21px;color:#555;font-size:9.5px;letter-spacing:-0.4px;-webkit-text-stroke:0.1px #555">11</div>
<div class="t c" style="left:0.5px;top:338px;width:21px;color:#555;font-size:9.5px;letter-spacing:-0.4px;-webkit-text-stroke:0.1px #555">12</div>
<div class="t c" style="left:0.5px;top:352px;width:21px;color:#555;font-size:9.5px;letter-spacing:-0.4px;-webkit-text-stroke:0.1px #555">13</div>
<div class="t c" style="left:0.5px;top:366px;width:21px;color:#555;font-size:9.5px;letter-spacing:-0.4px;-webkit-text-stroke:0.1px #555">14</div>
<div class="t c" style="left:0.5px;top:380px;width:21px;color:#555;font-size:9.5px;letter-spacing:-0.4px;-webkit-text-stroke:0.1px #555">15</div>
<div class="t c" style="left:0.5px;top:394px;width:21px;color:#555;font-size:9.5px;letter-spacing:-0.4px;-webkit-text-stroke:0.1px #555">16</div>
<div class="t c" style="left:0.5px;top:408px;width:21px;color:#555;font-size:9.5px;letter-spacing:-0.4px;-webkit-text-stroke:0.1px #555">17</div>
<div class="t c" style="left:0.5px;top:422px;width:21px;color:#555;font-size:9.5px;letter-spacing:-0.4px;-webkit-text-stroke:0.1px #555">18</div>
<div class="t c" style="left:0.5px;top:436px;width:21px;color:#555;font-size:9.5px;letter-spacing:-0.4px;-webkit-text-stroke:0.1px #555">19</div>
<div class="t c" style="left:0.5px;top:450px;width:21px;color:#555;font-size:9.5px;letter-spacing:-0.4px;-webkit-text-stroke:0.1px #555">20</div>
<div class="t c" style="left:0.5px;top:464px;width:21px;color:#555;font-size:9.5px;letter-spacing:-0.4px;-webkit-text-stroke:0.1px #555">21</div>
<div class="t c" style="left:0.5px;top:478px;width:21px;color:#555;font-size:9.5px;letter-spacing:-0.4px;-webkit-text-stroke:0.1px #555">22</div>
<div class="t c" style="left:0.5px;top:492px;width:21px;color:#555;font-size:9.5px;letter-spacing:-0.4px;-webkit-text-stroke:0.1px #555">23</div>
<div class="t c" style="left:0.5px;top:506px;width:21px;color:#555;font-size:9.5px;letter-spacing:-0.4px;-webkit-text-stroke:0.1px #555">24</div>
<div class="t c" style="left:0.5px;top:520px;width:21px;color:#555;font-size:9.5px;letter-spacing:-0.4px;-webkit-text-stroke:0.1px #555">25</div>
<div class="t c" style="left:0.5px;top:534px;width:21px;color:#555;font-size:9.5px;letter-spacing:-0.4px;-webkit-text-stroke:0.1px #555">26</div>
<div class="t c" style="left:0.5px;top:548px;width:21px;color:#555;font-size:9.5px;letter-spacing:-0.4px;-webkit-text-stroke:0.1px #555">27</div>
<div class="t c" style="left:0.5px;top:562px;width:21px;color:#555;font-size:9.5px;letter-spacing:-0.4px;-webkit-text-stroke:0.1px #555">28</div>
<div class="t c" style="left:0.5px;top:576px;width:21px;color:#555;font-size:9.5px;letter-spacing:-0.4px;-webkit-text-stroke:0.1px #555">29</div>
<div class="t c" style="left:0.5px;top:590px;width:21px;color:#555;font-size:9.5px;letter-spacing:-0.4px;-webkit-text-stroke:0.1px #555">30</div>
<div class="t c" style="left:0.5px;top:604px;width:21px;color:#555;font-size:9.5px;letter-spacing:-0.4px;-webkit-text-stroke:0.1px #555">31</div>
<div class="t c" style="left:0.5px;top:618px;width:21px;color:#555;font-size:9.5px;letter-spacing:-0.4px;-webkit-text-stroke:0.1px #555">32</div>
<div class="t c" style="left:0.5px;top:632px;width:21px;color:#555;font-size:9.5px;letter-spacing:-0.4px;-webkit-text-stroke:0.1px #555">33</div>
<div class="t c" style="left:0.5px;top:646px;width:21px;color:#555;font-size:9.5px;letter-spacing:-0.4px;-webkit-text-stroke:0.1px #555">34</div>
<div class="t c" style="left:0.5px;top:660px;width:21px;color:#555;font-size:9.5px;letter-spacing:-0.4px;-webkit-text-stroke:0.1px #555">35</div>
<div class="t c" style="left:0.5px;top:674px;width:21px;color:#555;font-size:9.5px;letter-spacing:-0.4px;-webkit-text-stroke:0.1px #555">36</div>
<div class="t c" style="left:0.5px;top:688px;width:21px;color:#555;font-size:9.5px;letter-spacing:-0.4px;-webkit-text-stroke:0.1px #555">37</div>
<div class="t c" style="left:0.5px;top:702px;width:21px;color:#555;font-size:9.5px;letter-spacing:-0.4px;-webkit-text-stroke:0.1px #555">38</div>
<div class="t c" style="left:0.5px;top:716px;width:21px;color:#555;font-size:9.5px;letter-spacing:-0.4px;-webkit-text-stroke:0.1px #555">39</div>
<div class="t c" style="left:0.5px;top:730px;width:21px;color:#555;font-size:9.5px;letter-spacing:-0.4px;-webkit-text-stroke:0.1px #555">40</div>
<div class="t c" style="left:0.5px;top:744px;width:21px;color:#555;font-size:9.5px;letter-spacing:-0.4px;-webkit-text-stroke:0.1px #555">41</div>
<div class="t c" style="left:0.5px;top:758px;width:21px;color:#555;font-size:9.5px;letter-spacing:-0.4px;-webkit-text-stroke:0.1px #555">42</div>
<div class="t c" style="left:0.5px;top:772px;width:21px;color:#555;font-size:9.5px;letter-spacing:-0.4px;-webkit-text-stroke:0.1px #555">43</div>
<div class="t c" style="left:0.5px;top:786px;width:21px;color:#555;font-size:9.5px;letter-spacing:-0.4px;-webkit-text-stroke:0.1px #555">44</div>
<div class="t c" style="left:0.5px;top:800px;width:21px;color:#555;font-size:9.5px;letter-spacing:-0.4px;-webkit-text-stroke:0.1px #555">45</div>
<div class="t c" style="left:0.5px;top:814px;width:21px;color:#555;font-size:9.5px;letter-spacing:-0.4px;-webkit-text-stroke:0.1px #555">46</div>
<div class="t c" style="left:0.5px;top:828px;width:21px;color:#555;font-size:9.5px;letter-spacing:-0.4px;-webkit-text-stroke:0.1px #555">47</div>
<div class="t c" style="left:0.5px;top:842px;width:21px;color:#555;font-size:9.5px;letter-spacing:-0.4px;-webkit-text-stroke:0.1px #555">48</div>
<div class="t c" style="left:0.5px;top:856px;width:21px;color:#555;font-size:9.5px;letter-spacing:-0.4px;-webkit-text-stroke:0.1px #555">49</div>
<div class="t c" style="left:0.5px;top:870px;width:21px;color:#555;font-size:9.5px;letter-spacing:-0.4px;-webkit-text-stroke:0.1px #555">50</div>
<div class="t c" style="left:0.5px;top:884px;width:21px;color:#555;font-size:9.5px;letter-spacing:-0.4px;-webkit-text-stroke:0.1px #555">51</div>
<div class="t c" style="left:0.5px;top:898px;width:21px;color:#555;font-size:9.5px;letter-spacing:-0.4px;-webkit-text-stroke:0.1px #555">52</div>
<div class="t c" style="left:0.5px;top:912px;width:21px;color:#555;font-size:9.5px;letter-spacing:-0.4px;-webkit-text-stroke:0.1px #555">53</div>
<div class="t c" style="left:0.5px;top:926px;width:21px;color:#555;font-size:9.5px;letter-spacing:-0.4px;-webkit-text-stroke:0.1px #555">54</div>
<div class="t c" style="left:0.5px;top:940px;width:21px;color:#555;font-size:9.5px;letter-spacing:-0.4px;-webkit-text-stroke:0.1px #555">55</div>
<div class="t c" style="left:0.5px;top:954px;width:21px;color:#555;font-size:9.5px;letter-spacing:-0.4px;-webkit-text-stroke:0.1px #555">56</div>
<div class="t c" style="left:0.5px;top:968px;width:21px;color:#555;font-size:9.5px;letter-spacing:-0.4px;-webkit-text-stroke:0.1px #555">57</div>
<div class="a" style="left:20px;top:198px;width:2px;height:14px;background:#1d7a45"></div>
<div class="t c" style="left:21px;top:198px;width:75px">№</div>
<div class="t c" style="left:96px;top:198px;width:75px">Телефон 1</div>
<div class="t c" style="left:171px;top:198px;width:75px">Телефон 2</div>
<div class="t c" style="left:246px;top:198px;width:75px">Телефон 3</div>
<div class="t c" style="left:321px;top:198px;width:75px">Телефон 4</div>
<div class="t c" style="left:396px;top:198px;width:75px">ФИО</div>
<div class="t c" style="left:471px;top:198px;width:60px">Статус кл</div>
<div class="t c" style="left:531px;top:198px;width:125px">Риелт</div>
<div class="t c" style="left:656px;top:198px;width:75px">Статус предл</div>
<div class="t c" style="left:731px;top:198px;width:125px">Ком кл</div>
<div class="t c" style="left:856px;top:198px;width:125px">Заметка кл</div>
<div class="t c" style="left:981px;top:198px;width:125px">Ком запрос</div>
<div class="t c" style="left:1106px;top:198px;width:125px">Замет запрос</div>
<div class="t r" style="left:21px;top:226px;width:73px">21209215</div>
<div class="t r" style="left:96px;top:226px;width:73px">509988234</div>
<div class="t" style="left:399px;top:226px">Дмитро</div>
<div class="t" style="left:534px;top:226px">Сергій Кім</div>
<div class="t r" style="left:21px;top:240px;width:73px">21209247</div>
<div class="t r" style="left:96px;top:240px;width:73px">509988332</div>
<div class="t" style="left:399px;top:240px">Микола</div>
<div class="t" style="left:534px;top:240px">Петренко Дмитро</div>
<div class="t r" style="left:21px;top:254px;width:73px">21209805</div>
<div class="t r" style="left:96px;top:254px;width:73px">507773311</div>
<div class="t" style="left:399px;top:254px">Петро</div>
<div class="t" style="left:474px;top:254px;width:57px;overflow:hidden">Холодний</div>
<div class="t" style="left:534px;top:254px">Петренко Дмитро</div>
<div class="t r" style="left:21px;top:268px;width:73px">21211344</div>
<div class="t r" style="left:96px;top:268px;width:73px">504344322</div>
<div class="t" style="left:399px;top:268px">Оксана</div>
<div class="t" style="left:534px;top:268px">Сергій Кім</div>
<div class="t r" style="left:21px;top:282px;width:73px">21215467</div>
<div class="t r" style="left:96px;top:282px;width:73px">5033344222</div>
<div class="t" style="left:399px;top:282px">Олександр</div>
<div class="t" style="left:534px;top:282px">Петренко Дмитро</div>
<div class="t r" style="left:21px;top:296px;width:73px">21216179</div>
<div class="t r" style="left:96px;top:296px;width:73px">504455111</div>
<div class="t" style="left:399px;top:296px">Олександр</div>
<div class="t" style="left:534px;top:296px">Петренко Дмитро</div>
<div class="t r" style="left:21px;top:310px;width:73px">21216859</div>
<div class="t r" style="left:96px;top:310px;width:73px">504443322</div>
<div class="t" style="left:399px;top:310px">Олександр</div>
<div class="t" style="left:474px;top:310px;width:57px;overflow:hidden">Гарячі</div>
<div class="t" style="left:534px;top:310px">Петренко Дмитро</div>
<div class="t r" style="left:21px;top:324px;width:73px">21217132</div>
<div class="t r" style="left:96px;top:324px;width:73px">506688433</div>
<div class="t" style="left:399px;top:324px">Олександр</div>
<div class="t" style="left:534px;top:324px">Петренко Дмитро</div>
<div class="t r" style="left:21px;top:338px;width:73px">21217177</div>
<div class="t r" style="left:96px;top:338px;width:73px">50664323</div>
<div class="t" style="left:399px;top:338px">Олександр</div>
<div class="t" style="left:534px;top:338px">Петренко Дмитро</div>
<div class="t r" style="left:21px;top:352px;width:73px">21219690</div>
<div class="t r" style="left:96px;top:352px;width:73px">504443322</div>
<div class="t" style="left:399px;top:352px">Людмила</div>
<div class="t" style="left:534px;top:352px">Петренко Дмитро</div>
<div class="t r" style="left:21px;top:366px;width:73px">21219760</div>
<div class="t r" style="left:96px;top:366px;width:73px">505543334</div>
<div class="t" style="left:399px;top:366px">Олександр</div>
<div class="t" style="left:534px;top:366px">Петренко Дмитро</div>
<div class="t r" style="left:21px;top:380px;width:73px">21220282</div>
<div class="t r" style="left:96px;top:380px;width:73px">509997755</div>
<div class="t r" style="left:171px;top:380px;width:73px">990624421</div>
<div class="t" style="left:399px;top:380px">Олександр</div>
<div class="t" style="left:474px;top:380px;width:57px;overflow:hidden">Не опрацьова</div>
<div class="t" style="left:534px;top:380px">Петренко Дмитро</div>
<div class="t r" style="left:21px;top:394px;width:73px">21221284</div>
<div class="t r" style="left:96px;top:394px;width:73px">635544111</div>
<div class="t" style="left:399px;top:394px">Олександр</div>
<div class="t" style="left:534px;top:394px">Петренко Дмитро</div>
<div class="t r" style="left:21px;top:408px;width:73px">21221289</div>
<div class="t r" style="left:96px;top:408px;width:73px">987776611</div>
<div class="t" style="left:399px;top:408px">Ольга</div>
<div class="t" style="left:534px;top:408px">Петренко Дмитро</div>
<div class="t r" style="left:21px;top:422px;width:73px">21221561</div>
<div class="t r" style="left:96px;top:422px;width:73px">635542201</div>
<div class="t" style="left:399px;top:422px">Александр</div>
<div class="t" style="left:534px;top:422px">Петренко Дмитро</div>
<div class="t r" style="left:21px;top:436px;width:73px">21222019</div>
<div class="t r" style="left:96px;top:436px;width:73px">678884433</div>
<div class="t" style="left:399px;top:436px">Олександр</div>
<div class="t" style="left:534px;top:436px">Петренко Дмитро</div>
<div class="t r" style="left:21px;top:450px;width:73px">21222416</div>
<div class="t r" style="left:96px;top:450px;width:73px">997773456</div>
<div class="t" style="left:399px;top:450px">Олександр</div>
<div class="t" style="left:534px;top:450px">Петренко Дмитро</div>
<div class="t r" style="left:21px;top:464px;width:73px">21222639</div>
<div class="t r" style="left:96px;top:464px;width:73px">739998822</div>
<div class="t" style="left:399px;top:464px">Александр</div>
<div class="t" style="left:534px;top:464px">Петренко Дмитро</div>
<div class="t r" style="left:21px;top:478px;width:73px">21222789</div>
<div class="t r" style="left:96px;top:478px;width:73px">667788333</div>
<div class="t" style="left:399px;top:478px">Александр</div>
<div class="t" style="left:534px;top:478px">Петренко Дмитро</div>
<div class="t r" style="left:21px;top:492px;width:73px">21222856</div>
<div class="t r" style="left:96px;top:492px;width:73px">504422000</div>
<div class="t" style="left:399px;top:492px">Александр</div>
<div class="t" style="left:534px;top:492px">Петренко Дмитро</div>
<div class="t r" style="left:21px;top:506px;width:73px">21222934</div>
<div class="t r" style="left:96px;top:506px;width:73px">503300011</div>
<div class="t" style="left:399px;top:506px">Александр</div>
<div class="t" style="left:534px;top:506px">Петренко Дмитро</div>
<div class="t r" style="left:21px;top:520px;width:73px">21223111</div>
<div class="t r" style="left:96px;top:520px;width:73px">505566999</div>
<div class="t" style="left:399px;top:520px">Олександр</div>
<div class="t" style="left:534px;top:520px">Петренко Дмитро</div>
<div class="t r" style="left:21px;top:534px;width:73px">21224382</div>
<div class="t r" style="left:96px;top:534px;width:73px">665554321</div>
<div class="t" style="left:399px;top:534px">Олександр</div>
<div class="t" style="left:534px;top:534px">Петренко Дмитро</div>
<div class="t r" style="left:21px;top:548px;width:73px">21224659</div>
<div class="t r" style="left:96px;top:548px;width:73px">508889911</div>
<div class="t" style="left:399px;top:548px">Олександр</div>
<div class="t" style="left:534px;top:548px">Петренко Дмитро</div>
<div class="t r" style="left:21px;top:562px;width:73px">21224916</div>
<div class="t r" style="left:96px;top:562px;width:73px">677779911</div>
<div class="t" style="left:399px;top:562px">Сергій</div>
<div class="t" style="left:534px;top:562px">Петренко Дмитро</div>
<div class="t r" style="left:21px;top:576px;width:73px">21224916</div>
<div class="t r" style="left:96px;top:576px;width:73px">677779911</div>
<div class="t" style="left:399px;top:576px">Сергій</div>
<div class="t" style="left:534px;top:576px">Петренко Дмитро</div>
<div class="t r" style="left:21px;top:590px;width:73px">21225429</div>
<div class="t r" style="left:96px;top:590px;width:73px">673177734</div>
<div class="t" style="left:399px;top:590px">Олена</div>
<div class="t" style="left:534px;top:590px">Петренко Дмитро</div>
<div class="t r" style="left:21px;top:604px;width:73px">21225540</div>
<div class="t r" style="left:96px;top:604px;width:73px">509991122</div>
<div class="t" style="left:399px;top:604px">Сергій</div>
<div class="t" style="left:534px;top:604px">Петренко Дмитро</div>
<div class="t r" style="left:21px;top:618px;width:73px">21230810</div>
<div class="t r" style="left:96px;top:618px;width:73px">507779900</div>
<div class="t" style="left:399px;top:618px">Александр</div>
<div class="t" style="left:534px;top:618px">Петренко Дмитро</div>
<div class="t r" style="left:21px;top:632px;width:73px">21231317</div>
<div class="t r" style="left:96px;top:632px;width:73px">508889900</div>
<div class="t" style="left:399px;top:632px">Олександр</div>
<div class="t" style="left:534px;top:632px">Петренко Дмитро</div>
<div class="t r" style="left:21px;top:646px;width:73px">21231318</div>
<div class="t r" style="left:96px;top:646px;width:73px">994443311</div>
<div class="t" style="left:399px;top:646px">Олександр</div>
<div class="t" style="left:534px;top:646px">Петренко Дмитро</div>
<div class="t r" style="left:21px;top:660px;width:73px">21232063</div>
<div class="t r" style="left:96px;top:660px;width:73px">508889900</div>
<div class="t" style="left:399px;top:660px">Александр</div>
<div class="t" style="left:534px;top:660px">Петренко Дмитро</div>
<div class="t r" style="left:21px;top:674px;width:73px">21232244</div>
<div class="t r" style="left:96px;top:674px;width:73px">508880011</div>
<div class="t" style="left:399px;top:674px">Александр</div>
<div class="t" style="left:534px;top:674px">Петренко Дмитро</div>
<div class="t r" style="left:21px;top:688px;width:73px">21232647</div>
<div class="t r" style="left:96px;top:688px;width:73px">509993344</div>
<div class="t" style="left:399px;top:688px">Олександр</div>
<div class="t" style="left:534px;top:688px">Петренко Дмитро</div>
<div class="t r" style="left:21px;top:702px;width:73px">21233157</div>
<div class="t r" style="left:96px;top:702px;width:73px">507770011</div>
<div class="t" style="left:399px;top:702px">Олександр</div>
<div class="t" style="left:474px;top:702px;width:57px;overflow:hidden">Гарячі</div>
<div class="t" style="left:534px;top:702px">Петренко Дмитро</div>
<div class="t r" style="left:21px;top:716px;width:73px">21233158</div>
<div class="t r" style="left:96px;top:716px;width:73px">504141888</div>
<div class="t" style="left:399px;top:716px">Олександр</div>
<div class="t" style="left:534px;top:716px">Петренко Дмитро</div>
<div class="t r" style="left:21px;top:730px;width:73px">21233165</div>
<div class="t r" style="left:96px;top:730px;width:73px">500002211</div>
<div class="t" style="left:399px;top:730px">Анна</div>
<div class="t" style="left:534px;top:730px">Петренко Дмитро</div>
<div class="t r" style="left:21px;top:744px;width:73px">21233309</div>
<div class="t r" style="left:96px;top:744px;width:73px">665559911</div>
<div class="t" style="left:399px;top:744px">Назар</div>
<div class="t" style="left:534px;top:744px">Петренко Дмитро</div>
<div class="t r" style="left:21px;top:758px;width:73px">21233403</div>
<div class="t r" style="left:96px;top:758px;width:73px">66998434</div>
<div class="t" style="left:399px;top:758px">Александр</div>
<div class="t" style="left:534px;top:758px">Петренко Дмитро</div>
<div class="t r" style="left:21px;top:772px;width:73px">21234168</div>
<div class="t r" style="left:96px;top:772px;width:73px">504433233</div>
<div class="t" style="left:399px;top:772px">Александр</div>
<div class="t" style="left:534px;top:772px">Петренко Дмитро</div>
<div class="t r" style="left:21px;top:786px;width:73px">21234601</div>
<div class="t r" style="left:96px;top:786px;width:73px">504141555</div>
<div class="t" style="left:399px;top:786px">Олександр</div>
<div class="t" style="left:534px;top:786px">Петренко Дмитро</div>
<div class="t r" style="left:21px;top:800px;width:73px">21234633</div>
<div class="t r" style="left:96px;top:800px;width:73px">985534324</div>
<div class="t" style="left:399px;top:800px">Олександр</div>
<div class="t" style="left:534px;top:800px">Петренко Дмитро</div>
<div class="t r" style="left:21px;top:814px;width:73px">21234683</div>
<div class="t r" style="left:96px;top:814px;width:73px">504443322</div>
<div class="t" style="left:399px;top:814px">Олег</div>
<div class="t" style="left:534px;top:814px">Петренко Дмитро</div>
<div class="t r" style="left:21px;top:828px;width:73px">21234721</div>
<div class="t r" style="left:96px;top:828px;width:73px">509911777</div>
<div class="t" style="left:399px;top:828px">Сергій</div>
<div class="t" style="left:474px;top:828px;width:57px;overflow:hidden">Теплий</div>
<div class="t" style="left:534px;top:828px">Петренко Дмитро</div>
<div class="t r" style="left:21px;top:842px;width:73px">21235402</div>
<div class="t r" style="left:96px;top:842px;width:73px">508800012</div>
<div class="t" style="left:399px;top:842px">Олександр</div>
<div class="t" style="left:534px;top:842px">Петренко Дмитро</div>
<div class="t r" style="left:21px;top:856px;width:73px">21236214</div>
<div class="t r" style="left:96px;top:856px;width:73px">50344323123</div>
<div class="t" style="left:399px;top:856px">Олександр</div>
<div class="t" style="left:534px;top:856px">Петренко Дмитро</div>
<div class="t r" style="left:21px;top:870px;width:73px">21236712</div>
<div class="t r" style="left:96px;top:870px;width:73px">5033423423</div>
<div class="t" style="left:399px;top:870px">Новый клиент</div>
<div class="t" style="left:534px;top:870px">Петренко Дмитро</div>
<div class="t r" style="left:21px;top:884px;width:73px">21236917</div>
<div class="t r" style="left:96px;top:884px;width:73px">509993300</div>
<div class="t" style="left:399px;top:884px">Александр</div>
<div class="t" style="left:534px;top:884px">Петренко Дмитро</div>
<div class="t r" style="left:21px;top:898px;width:73px">21237020</div>
<div class="t r" style="left:96px;top:898px;width:73px">508887744</div>
<div class="t" style="left:399px;top:898px">Иван</div>
<div class="t" style="left:534px;top:898px">Петренко Дмитро</div>
<div class="t r" style="left:21px;top:912px;width:73px">21237998</div>
<div class="t r" style="left:96px;top:912px;width:73px">505550097</div>
<div class="t" style="left:399px;top:912px">Олександр</div>
<div class="t" style="left:534px;top:912px">Петренко Дмитро</div>
<div class="t r" style="left:21px;top:926px;width:73px">21255786</div>
<div class="t r" style="left:96px;top:926px;width:73px">503330011</div>
<div class="t" style="left:399px;top:926px">Олександр</div>
<div class="t" style="left:474px;top:926px;width:57px;overflow:hidden">Гарячі</div>
<div class="t" style="left:534px;top:926px">Петренко Дмитро</div>
<div class="t r" style="left:21px;top:940px;width:73px">21256027</div>
<div class="t r" style="left:96px;top:940px;width:73px">504442233</div>
<div class="t" style="left:399px;top:940px">Александр</div>
<div class="t" style="left:534px;top:940px">Петренко Дмитро</div>
<div class="a" style="left:981px;top:647px;width:1px;height:13px;background:#fff"></div>
<div class="t" style="left:859px;top:646px">Сформовано з ліду 402534, Хочу квартиру</div>
<div class="t" style="left:734px;top:786px">212-910-275 </div>
<div class="t" style="left:859px;top:786px">212-910-275 </div>
<div class="a" style="left:731px;top:927px;width:1px;height:13px;background:#fff"></div>
<div class="t" style="left:659px;top:926px">подбор полное совпадение</div>
<div class="a" style="left:731px;top:941px;width:1px;height:13px;background:#fff"></div>
<div class="t" style="left:659px;top:940px">подбор полное совпадение</div>
<div class="a" style="left:1105px;top:197px;width:128px;height:17px;border:2px solid #1d7a45"></div>
<div class="a" style="left:1228px;top:209px;width:7px;height:7px;background:#1d7a45;border:1px solid #fff"></div>
</body></html>
